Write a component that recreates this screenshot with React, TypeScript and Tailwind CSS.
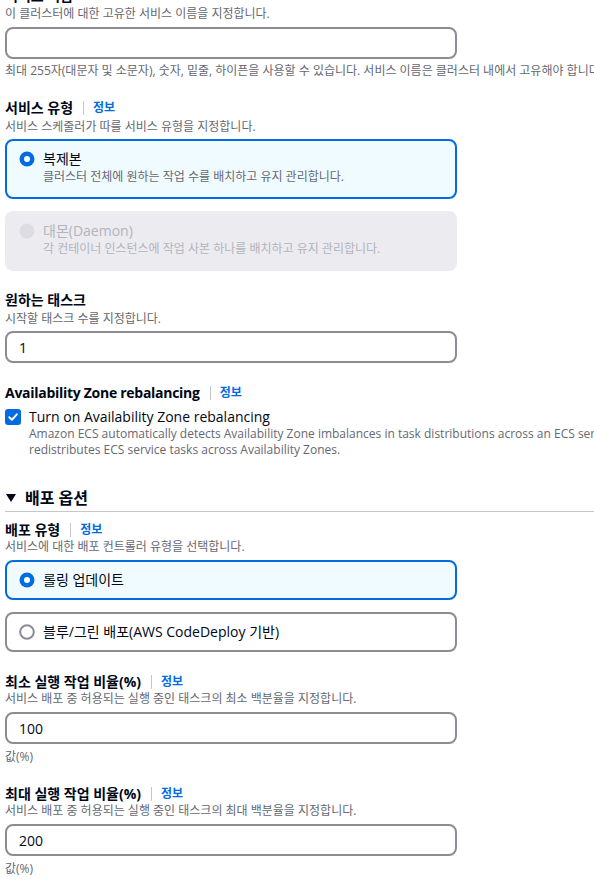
import React from "react";

const Label = ({ text, info, latin }: { text: React.ReactNode; info?: boolean; latin?: boolean }) => (
  <div className="flex items-center h-[18px] text-[14px] leading-[18px] font-bold text-[#000716]">
    <span className={latin ? "tracking-[-0.02em]" : ""}>{text}</span>
    {info && (
      <>
        <span className="ml-[10px] h-[14px] border-l border-[#c6c6cd]" />
        <span className="ml-[9px] text-[12px] font-bold text-[#006ce0]">정보</span>
      </>
    )}
  </div>
);

const Desc = ({ children, className = "" }: { children: React.ReactNode; className?: string }) => (
  <div className={"text-[12px] leading-[16px] text-[#656871] whitespace-nowrap " + className}>{children}</div>
);

const Input = ({ value, className = "" }: { value?: string; className?: string }) => (
  <div
    className={
      "w-[452px] h-[32px] border-2 border-[#8c8c94] rounded-[8px] px-[12px] flex items-center text-[14px] text-[#000716] " +
      className
    }
  >
    {value}
  </div>
);

const Radio = ({ state }: { state: "on" | "off" | "disabled" }) => (
  <svg width="16" height="16" viewBox="0 0 16 16" className="shrink-0">
    {state === "on" && (
      <>
        <circle cx="8" cy="8" r="7.5" fill="#006ce0" />
        <circle cx="8" cy="8" r="3" fill="#ffffff" />
      </>
    )}
    {state === "off" && <circle cx="8" cy="8" r="6.8" fill="#ffffff" stroke="#8c8c94" strokeWidth="2" />}
    {state === "disabled" && <circle cx="8" cy="8" r="7.5" fill="#dcdce2" />}
  </svg>
);

export default function App() {
  return (
    <div className="w-[594px] h-[879px] overflow-hidden bg-white">
      <div className="w-[900px] pl-[5px] -mt-[13px] font-['Open_Sans','Noto_Sans_CJK_KR',sans-serif] flex flex-col">
        {/* 서비스 이름 */}
        <Label text="서비스 이름" />
        <Desc className="mt-[1px]">이 클러스터에 대한 고유한 서비스 이름을 지정합니다.</Desc>
        <Input className="mt-[5px]" />
        <Desc className="mt-[4px]">
          최대 255자(대문자 및 소문자), 숫자, 밑줄, 하이픈을 사용할 수 있습니다. 서비스 이름은 클러스터 내에서 고유해야 합니다.
        </Desc>

        {/* 서비스 유형 */}
        <div className="mt-[20px]">
          <Label text="서비스 유형" info />
        </div>
        <Desc className="mt-[2px]">서비스 스케줄러가 따를 서비스 유형을 지정합니다.</Desc>
        <div className="mt-[4px] w-[452px] h-[60px] border-2 border-[#006ce0] bg-[#f0fbff] rounded-[8px] pl-[12px] pt-[9px] flex gap-[8px]">
          <div className="h-[18px] flex items-center">
            <Radio state="on" />
          </div>
          <div>
            <div className="text-[14px] leading-[18px] text-[#000716]">복제본</div>
            <Desc className="mt-[1px]">클러스터 전체에 원하는 작업 수를 배치하고 유지 관리합니다.</Desc>
          </div>
        </div>
        <div className="mt-[12px] w-[452px] h-[60px] border-2 border-[#ebebf0] bg-[#ebebf0] rounded-[8px] pl-[12px] pt-[9px] flex gap-[8px]">
          <div className="h-[18px] flex items-center">
            <Radio state="disabled" />
          </div>
          <div>
            <div className="text-[14px] leading-[18px] text-[#b4b4bb]">대몬(Daemon)</div>
            <div className="mt-[1px] text-[12px] leading-[16px] text-[#b4b4bb]">
              각 컨테이너 인스턴스에 작업 사본 하나를 배치하고 유지 관리합니다.
            </div>
          </div>
        </div>

        {/* 원하는 태스크 */}
        <div className="mt-[20px]">
          <Label text="원하는 태스크" />
        </div>
        <Desc className="mt-[2px]">시작할 태스크 수를 지정합니다.</Desc>
        <Input className="mt-[4px]" value="1" />

        {/* Availability Zone rebalancing */}
        <div className="mt-[21px]">
          <Label text="Availability Zone rebalancing" info latin />
        </div>
        <div className="mt-[6px] flex gap-[8px]">
          <div className="h-[18px] flex items-center">
            <div className="w-[16px] h-[16px] rounded-[3px] bg-[#006ce0] flex items-center justify-center">
              <svg width="12" height="12" viewBox="0 0 12 12">
                <path d="M2.3 6.3 L4.9 8.8 L9.8 3.3" fill="none" stroke="#ffffff" strokeWidth="2" strokeLinecap="round" strokeLinejoin="round" />
              </svg>
            </div>
          </div>
          <div>
            <div className="text-[14px] leading-[18px] text-[#000716]">Turn on Availability Zone rebalancing</div>
            <Desc>
              Amazon ECS automatically detects Availability Zone imbalances in task distributions across an ECS service and
            </Desc>
            <Desc>redistributes ECS service tasks across Availability Zones.</Desc>
          </div>
        </div>

        {/* 배포 옵션 */}
        <div className="mt-[29px] pb-[3px] border-b border-[#c6c6cd] flex items-center h-[25px] gap-[9px]">
          <svg width="10" height="8" viewBox="0 0 10 8" className="ml-[1px] shrink-0">
            <path d="M0 0 H10 L5 8 Z" fill="#000716" />
          </svg>
          <span className="text-[16px] leading-[22px] font-bold text-[#000716]">배포 옵션</span>
        </div>

        <div className="mt-[9px]">
          <Label text="배포 유형" info />
        </div>
        <Desc>서비스에 대한 배포 컨트롤러 유형을 선택합니다.</Desc>
        <div className="mt-[5px] w-[452px] h-[40px] border-2 border-[#006ce0] bg-[#f0fbff] rounded-[8px] pl-[12px] flex items-center gap-[8px]">
          <Radio state="on" />
          <span className="text-[14px] leading-[18px] text-[#000716]">롤링 업데이트</span>
        </div>
        <div className="mt-[12px] w-[452px] h-[40px] border-2 border-[#8c8c94] bg-white rounded-[8px] pl-[12px] flex items-center gap-[8px]">
          <Radio state="off" />
          <span className="text-[14px] leading-[18px] text-[#000716]">블루/그린 배포(AWS CodeDeploy 기반)</span>
        </div>

        {/* 최소 실행 작업 비율 */}
        <div className="mt-[21px]">
          <Label text="최소 실행 작업 비율(%)" info />
        </div>
        <Desc>서비스 배포 중 허용되는 실행 중인 태스크의 최소 백분율을 지정합니다.</Desc>
        <Input className="mt-[5px]" value="100" />
        <Desc className="mt-[5px]">값(%)</Desc>

        {/* 최대 실행 작업 비율 */}
        <div className="mt-[20px]">
          <Label text="최대 실행 작업 비율(%)" info />
        </div>
        <Desc>서비스 배포 중 허용되는 실행 중인 태스크의 최대 백분율을 지정합니다.</Desc>
        <Input className="mt-[5px]" value="200" />
        <Desc className="mt-[5px]">값(%)</Desc>
      </div>
    </div>
  );
}
